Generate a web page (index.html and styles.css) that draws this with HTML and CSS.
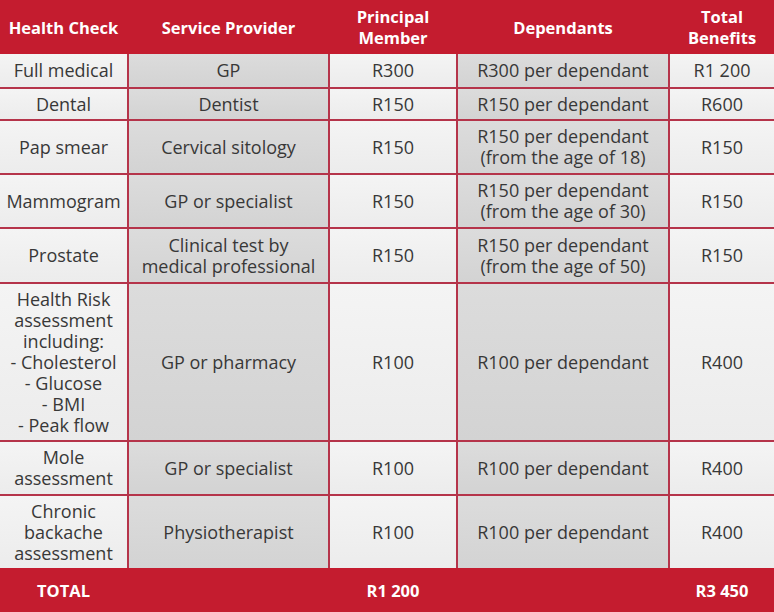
FILE: index.html
```html
<!DOCTYPE html>
<html>
<head>
<meta charset="utf-8">
<link rel="stylesheet" href="styles.css">
</head>
<body>
<div class="table">
  <div class="row head">
    <div class="c">Health Check</div>
    <div class="c">Service Provider</div>
    <div class="c"><span>Principal<br>Member</span></div>
    <div class="c">Dependants</div>
    <div class="c"><span>Total<br>Benefits</span></div>
  </div>
  <div class="body">
    <div class="c l">Full medical</div>
    <div class="c d">GP</div>
    <div class="c l">R300</div>
    <div class="c d">R300 per dependant</div>
    <div class="c l">R1 200</div>

    <div class="c l">Dental</div>
    <div class="c d">Dentist</div>
    <div class="c l">R150</div>
    <div class="c d">R150 per dependant</div>
    <div class="c l">R600</div>

    <div class="c l">Pap smear</div>
    <div class="c d">Cervical sitology</div>
    <div class="c l">R150</div>
    <div class="c d">R150 per dependant<br>(from the age of 18)</div>
    <div class="c l">R150</div>

    <div class="c l">Mammogram</div>
    <div class="c d">GP or specialist</div>
    <div class="c l">R150</div>
    <div class="c d">R150 per dependant<br>(from the age of 30)</div>
    <div class="c l">R150</div>

    <div class="c l">Prostate</div>
    <div class="c d">Clinical test by<br>medical professional</div>
    <div class="c l">R150</div>
    <div class="c d">R150 per dependant<br>(from the age of 50)</div>
    <div class="c l">R150</div>

    <div class="c l">Health Risk<br>assessment<br>including:<br>- Cholesterol<br>- Glucose<br>- BMI<br>- Peak flow</div>
    <div class="c d">GP or pharmacy</div>
    <div class="c l">R100</div>
    <div class="c d">R100 per dependant</div>
    <div class="c l">R400</div>

    <div class="c l">Mole<br>assessment</div>
    <div class="c d">GP or specialist</div>
    <div class="c l">R100</div>
    <div class="c d">R100 per dependant</div>
    <div class="c l">R400</div>

    <div class="c l">Chronic<br>backache<br>assessment</div>
    <div class="c d">Physiotherapist</div>
    <div class="c l">R100</div>
    <div class="c d">R100 per dependant</div>
    <div class="c l">R400</div>
  </div>
  <div class="row foot">
    <div class="c">TOTAL</div>
    <div class="c"></div>
    <div class="c">R1 200</div>
    <div class="c"></div>
    <div class="c">R3 450</div>
  </div>
</div>
</body>
</html>
```

FILE: styles.css
```css
* { box-sizing: border-box; }
html, body { margin: 0; padding: 0; background: #ffffff; }
body {
  font-family: "Open Sans", "Noto Sans", sans-serif;
  color: #383838;
}
.table {
  width: 774px;
  height: 612px;
  display: flex;
  flex-direction: column;
}
.row, .body {
  display: grid;
  grid-template-columns: 127px 199px 126px 210px 104px;
  column-gap: 2px;
}
.row.head {
  height: 54px;
  background: #c41c2f;
  color: #ffffff;
  font-weight: 700;
  font-size: 16.5px;
  line-height: 21px;
}
.row.foot {
  height: 44px;
  background: #c41c2f;
  color: #ffffff;
  font-weight: 700;
  font-size: 16.5px;
}
.body {
  background: #b5344a;
  row-gap: 2px;
  grid-template-rows: 33px 30px 52px 52px 53px 156px 52px 72px;
}
.c {
  display: flex;
  align-items: center;
  justify-content: center;
  text-align: center;
}
.body .c {
  font-size: 18px;
  line-height: 21px;
}
.l { background: linear-gradient(180deg, #f4f4f4 0%, #ececec 100%); }
.d { background: linear-gradient(180deg, #dcdcdc 0%, #d3d3d3 100%); }
```
